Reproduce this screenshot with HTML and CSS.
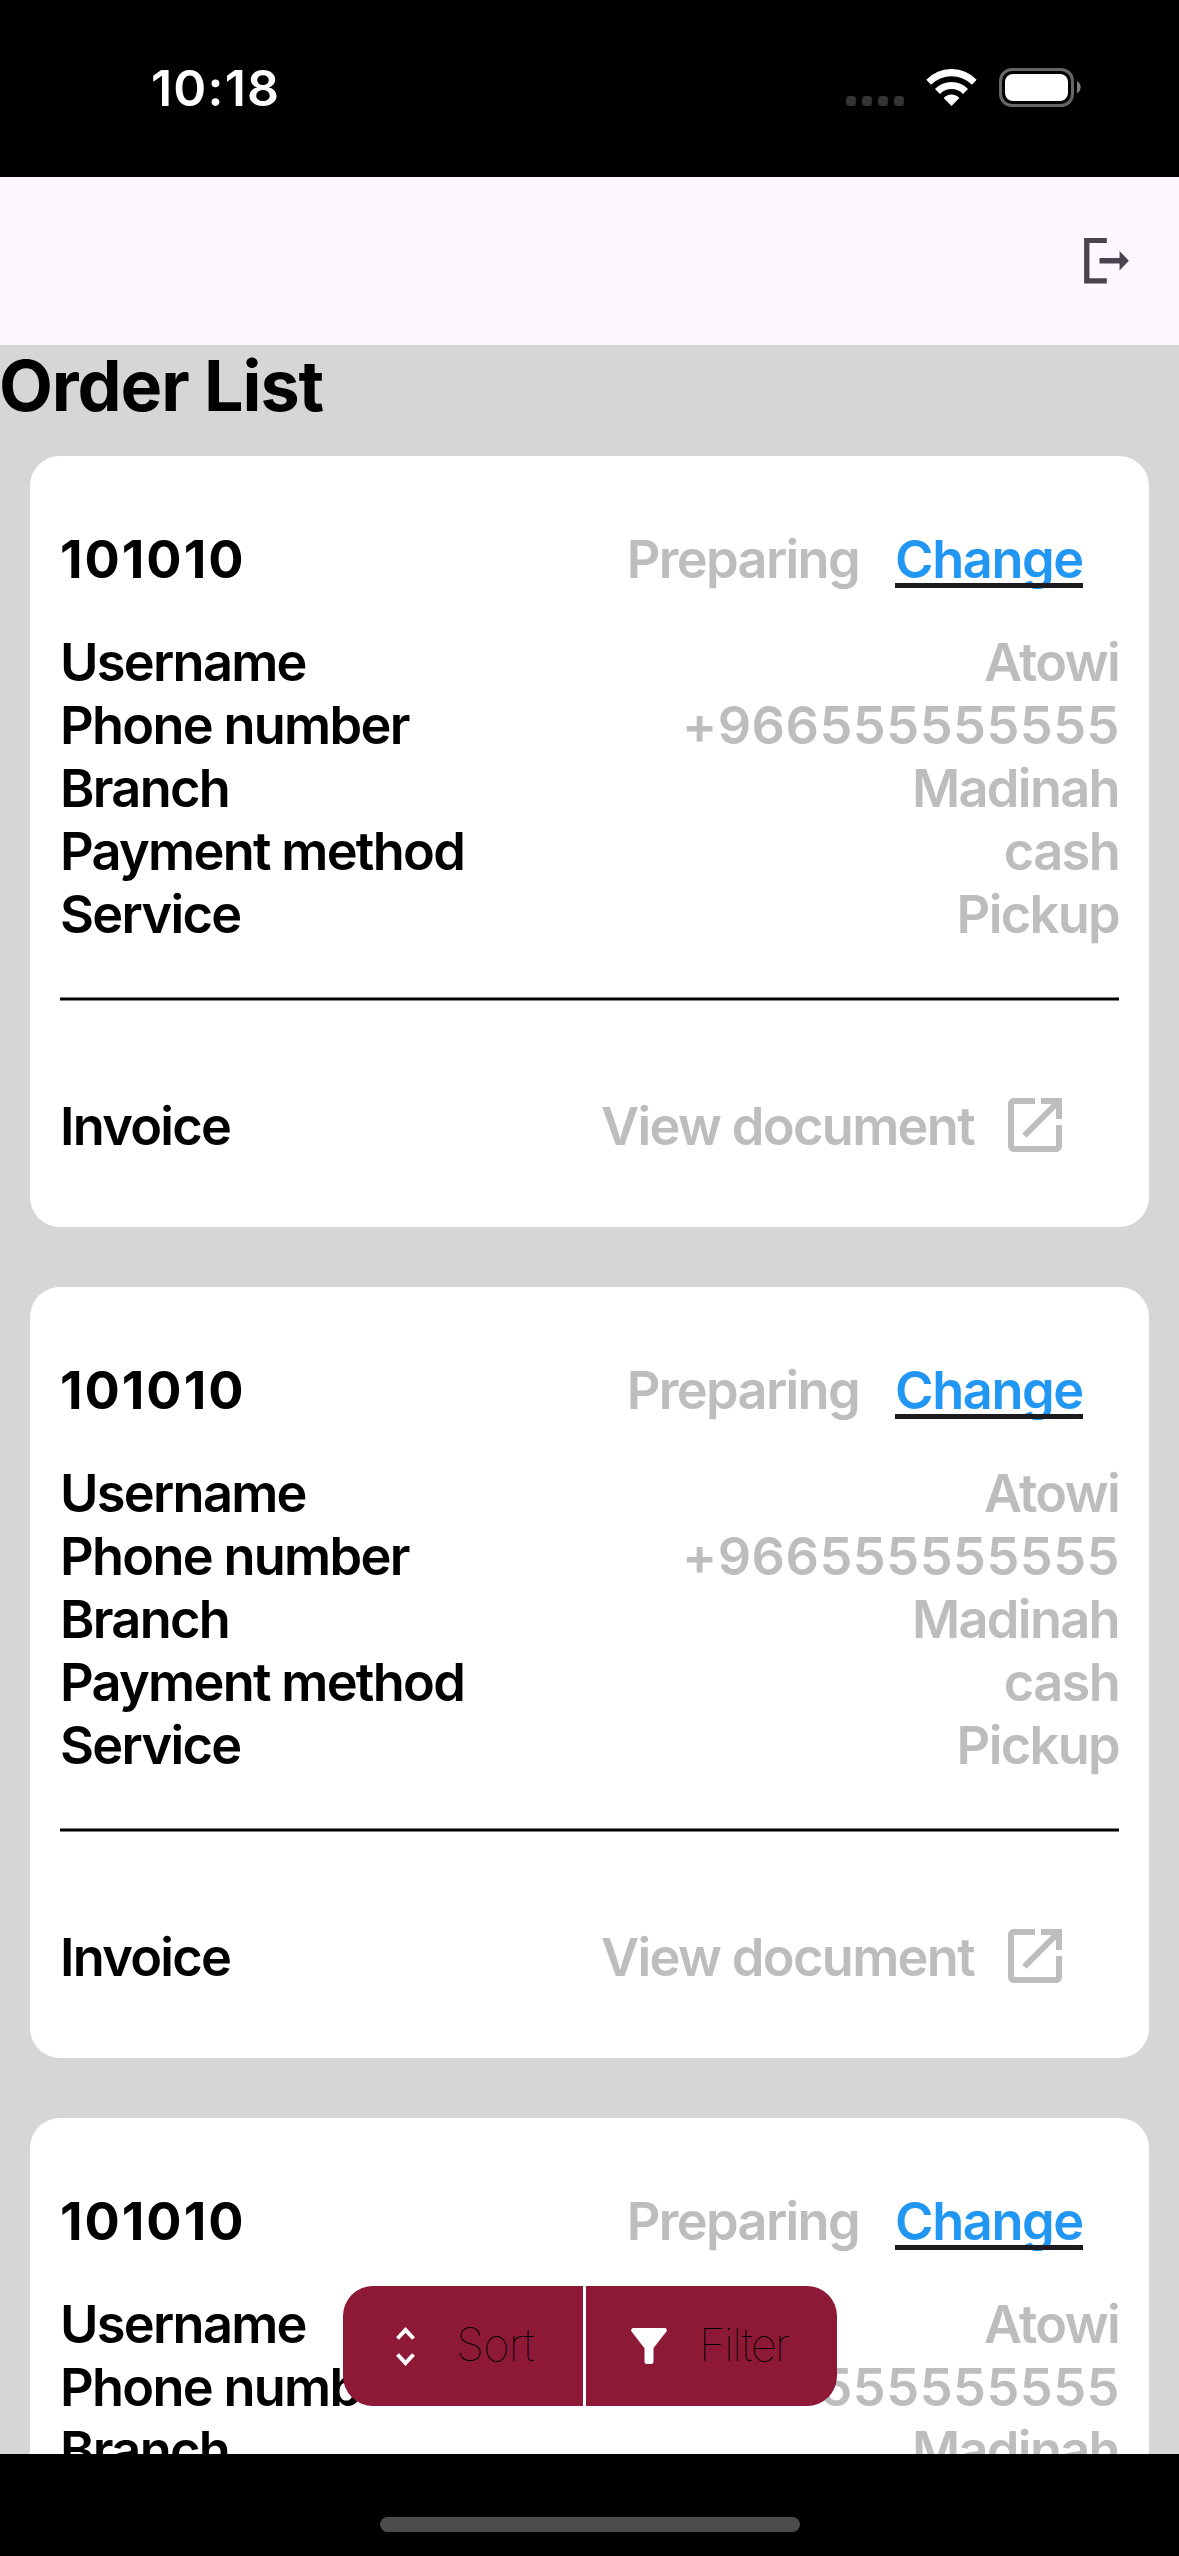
FILE: index.html
```html
<!DOCTYPE html>
<html lang="en">
<head>
<meta charset="utf-8">
<title>Order List</title>
<link rel="stylesheet" href="styles.css">
</head>
<body>
<svg class="defs" aria-hidden="true">
  <symbol id="open-in-new" viewBox="0 0 24 24">
    <path d="M19 19H5V5h7V3H5c-1.11 0-2 .9-2 2v14c0 1.1.89 2 2 2h14c1.1 0 2-.9 2-2v-7h-2v7zM14 3v2h3.59l-9.83 9.83 1.41 1.41L19 6.41V10h2V3h-7z"/>
  </symbol>
</svg>
<div class="screen">
  <header class="status-bar">
    <span class="clock">10:18</span>
    <div class="indicators">
      <div class="signal"><i></i><i></i><i></i><i></i></div>
      <svg class="wifi" viewBox="439 87 151 111">
        <path d="M439 119A105 105 0 0 1 590 119L576 134A88 88 0 0 0 453 134Z"/>
        <path d="M465 147A69 69 0 0 1 564 147L549 162A47 47 0 0 0 480 162Z"/>
        <path d="M491 174A31 31 0 0 1 538 174L514.5 198Z"/>
      </svg>
      <svg class="battery" viewBox="0 0 82 39">
        <rect class="battery-shell" x="1.5" y="1.5" width="72" height="36" rx="11.5"/>
        <rect class="battery-level" x="6" y="6" width="63" height="27" rx="8"/>
        <path class="battery-tip" d="M78 13.3A6.8 6.8 0 0 1 78 25.3Z"/>
      </svg>
    </div>
  </header>
  <nav class="app-bar">
    <svg class="logout" viewBox="913 595 134 136">
      <path d="M913 595H981V610H929V715H981V731H913Z"/>
      <path d="M959 655H1019V634L1047 663L1019 692V671H959Z"/>
    </svg>
  </nav>
  <main class="content">
    <h1 class="title">Order List</h1>
    <div class="orders">
      <article class="card">
        <div class="card-head"><span class="order-id">101010</span><span class="status">Preparing</span><a class="change">Change</a></div>
        <div class="row"><span>Username</span><span class="value">Atowi</span></div>
        <div class="row"><span>Phone number</span><span class="value phone">+966555555555</span></div>
        <div class="row"><span>Branch</span><span class="value">Madinah</span></div>
        <div class="row"><span>Payment method</span><span class="value">cash</span></div>
        <div class="row"><span>Service</span><span class="value">Pickup</span></div>
        <div class="divider"></div>
        <div class="invoice"><span>Invoice</span><span class="view">View document</span><svg class="open"><use href="#open-in-new"/></svg></div>
      </article>
      <article class="card">
        <div class="card-head"><span class="order-id">101010</span><span class="status">Preparing</span><a class="change">Change</a></div>
        <div class="row"><span>Username</span><span class="value">Atowi</span></div>
        <div class="row"><span>Phone number</span><span class="value phone">+966555555555</span></div>
        <div class="row"><span>Branch</span><span class="value">Madinah</span></div>
        <div class="row"><span>Payment method</span><span class="value">cash</span></div>
        <div class="row"><span>Service</span><span class="value">Pickup</span></div>
        <div class="divider"></div>
        <div class="invoice"><span>Invoice</span><span class="view">View document</span><svg class="open"><use href="#open-in-new"/></svg></div>
      </article>
      <article class="card">
        <div class="card-head"><span class="order-id">101010</span><span class="status">Preparing</span><a class="change">Change</a></div>
        <div class="row"><span>Username</span><span class="value">Atowi</span></div>
        <div class="row"><span>Phone number</span><span class="value phone">+966555555555</span></div>
        <div class="row"><span>Branch</span><span class="value">Madinah</span></div>
      </article>
    </div>
    <div class="actions">
      <button class="action sort">
        <svg class="sort-icon" viewBox="0 0 19 39"><path d="M1.5 11.5L9.5 3L17.5 11.5M1.5 27.5L9.5 36L17.5 27.5"/></svg>
        <span>Sort</span>
      </button>
      <button class="action filter">
        <svg class="filter-icon" viewBox="4 4 16 16"><path d="M4.25 5.61C6.27 8.2 10 13 10 13v6c0 .55.45 1 1 1h2c.55 0 1-.45 1-1v-6s3.72-4.8 5.74-7.39A.998.998 0 0 0 18.95 4H5.04c-.83 0-1.3.95-.79 1.61z"/></svg>
        <span>Filter</span>
      </button>
    </div>
  </main>
  <footer class="home-area"><div class="home-indicator"></div></footer>
</div>
</body>
</html>
```
FILE: styles.css
```css
* { box-sizing: border-box; }
body { margin: 0; font-family: Inter, "Liberation Sans", sans-serif; color: #000; }
.defs { display: none; }

.screen {
  width: 1179px;
  height: 2556px;
  display: flex;
  flex-direction: column;
  background: #000;
  overflow: hidden;
}

/* Status bar */
.status-bar {
  flex: none;
  height: 177px;
  padding: 58px 98px 0 151px;
  display: flex;
  justify-content: space-between;
  align-items: flex-start;
}
.clock { color: #fff; font-size: 50px; font-weight: 600; line-height: 60px; letter-spacing: 1.2px; }
.indicators { display: flex; align-items: flex-start; padding-top: 10px; }
.signal { display: flex; gap: 6px; margin: 28px 22px 0 0; }
.signal i { width: 10px; height: 10px; border-radius: 3.5px; background: #333; }
.wifi { width: 51px; height: 37px; margin: 1px 22px 0 0; fill: #fff; }
.battery { width: 82px; height: 39px; }
.battery-shell { fill: none; stroke: #666; stroke-width: 3; }
.battery-level { fill: #fff; }
.battery-tip { fill: #808080; }

/* App bar */
.app-bar {
  flex: none;
  height: 168px;
  padding-right: 50px;
  display: flex;
  align-items: center;
  justify-content: flex-end;
  background: #fef7ff;
}
.logout { width: 45px; height: 45.5px; fill: #49454f; }

/* Order list */
.content { position: relative; flex: none; height: 2109px; overflow: hidden; background: #d6d6d6; }
.title { margin: 0 0 0 -1px; padding-bottom: 30px; font-size: 70px; font-weight: 700; line-height: 81px; letter-spacing: -1.1px; }
.orders { display: flex; flex-direction: column; gap: 60px; padding: 0 30px; }
.card {
  padding: 30px;
  border-radius: 30px;
  background: #fff;
  font-size: 52.3px;
  font-weight: 600;
  line-height: 63px;
  letter-spacing: -1.7px;
  white-space: nowrap;
}
.card-head, .invoice { display: flex; align-items: center; height: 145px; padding-top: 2px; }
.order-id { flex: 1; font-weight: 700; letter-spacing: 2px; }
.status, .value, .view { color: #bdbdbd; font-weight: 580; letter-spacing: -1.65px; }
.value.phone { margin-right: -1px; letter-spacing: 0.5px; }
.change { position: relative; width: 188px; margin: 0 36px; color: #2196f3; font-weight: 580; letter-spacing: -1.4px; }
.change::after {
  content: "";
  position: absolute;
  left: 0;
  right: 0;
  bottom: 3px;
  height: 5px;
  background: #1d1b20;
}
.row { display: flex; justify-content: space-between; }
.divider { height: 106px; display: flex; align-items: center; }
.divider::before { content: ""; flex: 1; height: 2px; background: #000; border: solid #808080; border-width: 1px 0; }
.invoice span { padding-top: 2px; }
.view { margin-left: auto; }
.open { width: 72px; height: 72px; margin: 0 48px 1px 25px; fill: #bdbdbd; }

/* Floating actions */
.actions {
  position: absolute;
  left: 343px;
  bottom: 48px;
  width: 494px;
  height: 120px;
  display: flex;
  gap: 3px;
  border-radius: 30px;
  overflow: hidden;
  background: linear-gradient(#fff, #fff) 240px 0 / 3px 100% no-repeat;
}
.action {
  border: 0;
  padding: 0;
  display: flex;
  align-items: center;
  background: #8e1937;
  color: #000;
  font: 100 45.5px/56px Inter, "Liberation Sans", sans-serif;
}
.action span { padding-bottom: 2px; }
.sort { width: 240px; padding-left: 53px; gap: 41px; letter-spacing: -0.7px; }
.filter { flex: 1; padding-left: 45px; gap: 32px; letter-spacing: -1.6px; }
.sort-icon { width: 19px; height: 39px; fill: none; stroke: #fff; stroke-width: 4; }
.filter-icon { width: 36px; height: 36px; fill: #fff; }

/* Home indicator */
.home-area { flex: 1; display: flex; justify-content: center; padding-top: 63px; }
.home-indicator { width: 420px; height: 15px; border-radius: 8px; background: #4b4b4b; }
```
